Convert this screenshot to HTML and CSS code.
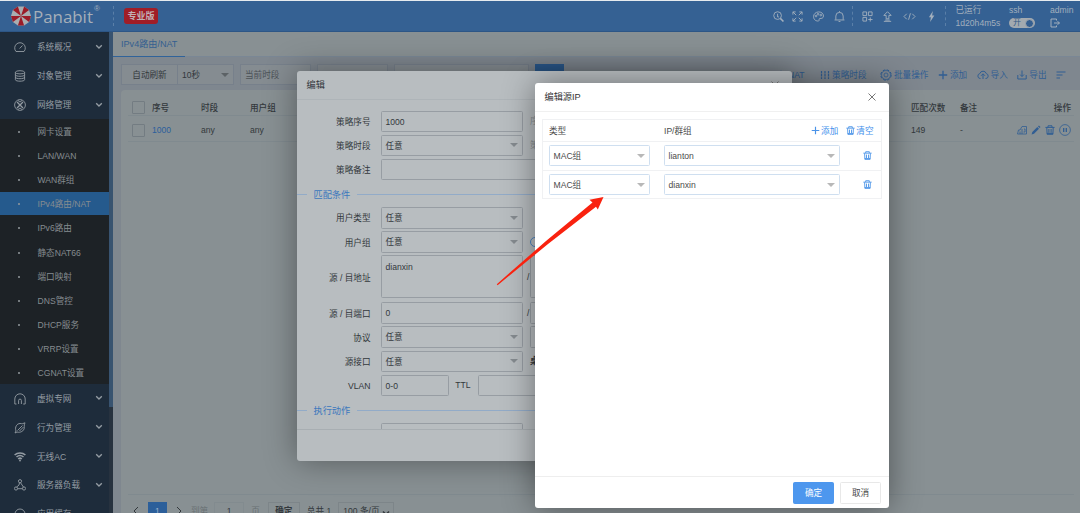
FILE: index.html
```html
<!DOCTYPE html>
<html lang="zh-CN">
<head>
<meta charset="utf-8">
<title>Panabit</title>
<link rel="stylesheet" href="styles.css">
</head>
<body>
<svg class="defs" width="0" height="0">
  <symbol id="trash" viewBox="0 0 10 10"><path d="M.4 2.400h9.200M3 2.200V.8h4v1.400M1.800 2.600l.3 6.700h5.800l.3-6.700M3.900 4v3.800M6.100 4v3.800M2 8.400h6"/></symbol>
  <symbol id="plus" viewBox="0 0 10 10"><path d="M5 .8v8.400M.8 5h8.400" stroke-width="1.300"/></symbol>
  <symbol id="down" viewBox="0 0 8 6"><path d="M1.200 1.200 4 4l2.800-2.800"/></symbol>
  <symbol id="close" viewBox="0 0 10 10"><path d="m1.500 1.500 7 7m0-7-7 7"/></symbol>
</svg>
<div class="app">
  <header class="topbar">
    <div class="brand">
      <svg class="logo" viewBox="0 0 20 20"><path fill="#a9adb0" d="M6.900.5h6.200l5 3.600L20 10l-1.900 5.900-5 3.600H6.900l-5-3.600L0 10l1.900-5.900z"/><path fill="#9b1c28" d="M10 10 13.100.5l5 3.600zM10 10h10l-1.900 5.900zM10 10l3.100 9.500H6.900zM10 10l-8.100 5.900L0 10zM10 10 1.900 4.100l5-3.600z"/></svg>
      <span class="brand-name">Panabit</span><span class="reg">®</span>
    </div>
    <div class="edition"><span>专业版</span></div>
    <div class="tools">
      <svg viewBox="0 0 12 12"><circle cx="5" cy="5" r="4.200"/><path d="m8 8 3.400 3.400" stroke-width="1.700"/><path d="M5 3v3.500h1.500"/></svg>
      <svg viewBox="0 0 12 12"><path d="M1 4V1h3M1 1l3.600 3.600M8 1h3v3M11 1 7.400 4.600M1 8v3h3M1 11l3.600-3.600M11 8v3H8M11 11 7.400 7.400"/></svg>
      <svg class="wide" viewBox="0 0 12 12"><path d="M6 11C2 11 .6 8.500 .6 6S3 1 6.200 1s5.200 2 5.200 4.500-2.300 2.800-3.800 2.600S7 11 6 11z"/><circle cx="3.300" cy="5.500" r=".9"/><circle cx="5.500" cy="3.500" r=".9"/><circle cx="8.500" cy="4.500" r=".9"/></svg>
      <svg viewBox="0 0 12 12"><path d="M.6 9.800h10.800M2 9.500V5.500a4 4 0 0 1 8 0v4M6 .2v1.300M5 11.500h2"/></svg>
    </div>
    <div class="tools second">
      <svg viewBox="0 0 12 12"><path d="M1 1h4v4H1zM7 1h4v4H7zM1 7h4v4H1zM9 7v4.500M6.800 9.300h4.700"/></svg>
      <svg viewBox="0 0 12 12"><path d="M6 .8 2 4.800h2.500v3.700h3V4.800H10zM2 11.300h8M3.500 9.900h5"/></svg>
      <svg class="wide" viewBox="0 0 14 12"><path d="M4 3 1 6l3 3M10 3l3 3-3 3M8 2.500l-2 7"/></svg>
      <svg viewBox="0 0 12 12"><path class="solid" d="M7.500 0 3.200 6.800h2.100L4.500 12l4.600-7H6.700z"/></svg>
    </div>
    <div class="uptime"><span>已运行</span><span>1d20h4m5s</span></div>
    <div class="ssh"><span>ssh</span><span class="switch">开<i></i></span></div>
    <div class="user"><span>admin</span><svg viewBox="0 0 10 10"><path d="M6.500 2.500V1H1v8h5.500V7.500M4 5h5.500M7.600 3.200 9.400 5 7.600 6.800"/></svg></div>
  </header>
  <div class="main">
    <nav class="side">
      <div class="menu">
        <a class="group"><svg viewBox="0 0 12 12"><path d="M2 10.500a5.300 5.300 0 1 1 8 0zM5.600 7.500 8.500 4.500"/></svg><span>系统概况</span><svg class="chev"><use href="#down"/></svg></a>
        <a class="group"><svg viewBox="0 0 12 12"><ellipse cx="6" cy="2.300" rx="4.600" ry="1.600"/><path d="M1.400 2.300v7.400c0 2 9.200 2 9.200 0V2.300M1.400 4.800c0 2 9.200 2 9.200 0M1.400 7.200c0 2 9.200 2 9.200 0"/></svg><span>对象管理</span><svg class="chev"><use href="#down"/></svg></a>
        <a class="group"><svg viewBox="0 0 12 12"><circle cx="6" cy="6" r="5.400"/><path d="m3 3 6 6M9 3 3 9" stroke-width="1.300"/><path d="M4 1.500 6 3l2-1.500M4 10.500 6 9l2 1.500"/></svg><span>网络管理</span><svg class="chev"><use href="#down"/></svg></a>
        <div class="sub">
          <a>网卡设置</a><a>LAN/WAN</a><a>WAN群组</a><a class="on">IPv4路由/NAT</a><a>IPv6路由</a><a>静态NAT66</a><a>端口映射</a><a>DNS管控</a><a>DHCP服务</a><a>VRRP设置</a><a>CGNAT设置</a>
        </div>
        <a class="group"><svg viewBox="0 0 12 12"><path d="M.8 11V6a5.200 5.200 0 0 1 10.400 0v5H9.200M.8 11h1.700M4.600 11V7.500a1.400 1.400 0 0 1 2.800 0V11"/></svg><span>虚拟专网</span><svg class="chev"><use href="#down"/></svg></a>
        <a class="group"><svg viewBox="0 0 12 12"><path d="M2 9c-1.500-4 1-7.500 4-7.500 1.500 0 2 .5 3 0l2-.7-.7 2c-.3 1 .2 2 0 3C10 9 6.500 11 3 10L1 11zM3.500 8.500l5-5M5.500 9l4-4"/></svg><span>行为管理</span><svg class="chev"><use href="#down"/></svg></a>
        <a class="group"><svg viewBox="0 0 12 12"><path d="M.6 4c3-2.600 7.800-2.600 10.800 0M2.500 6c2-1.700 5-1.700 7 0M4.200 8c1-.9 2.600-.9 3.600 0" stroke-width="1.600"/><circle class="solid" cx="6" cy="9.500" r=".9"/></svg><span>无线AC</span><svg class="chev"><use href="#down"/></svg></a>
        <a class="group"><svg viewBox="0 0 12 12"><circle cx="6" cy="2.200" r="1.600"/><circle cx="2" cy="9.500" r="1.600"/><circle cx="10" cy="9.500" r="1.600"/><path d="M5.500 3.700 5 6 2.600 8.100M6.500 3.700 9.500 8.100M3.500 9.700h5"/></svg><span>服务器负载</span><svg class="chev"><use href="#down"/></svg></a>
        <a class="group"><svg viewBox="0 0 12 12"><circle cx="6" cy="6" r="5"/></svg><span>应用缓存</span></a>
      </div>
      <div class="scroll"><i></i></div>
    </nav>
    <section class="content">
      <div class="tabs"><span class="tab">IPv4路由/NAT</span></div>
      <div class="filters">
        <div class="combo"><span class="auto">自动刷新</span><span class="pick">10秒<i class="caret"></i></span></div>
        <div class="box when">当前时段</div><div class="box b2"></div><div class="box b3"></div><div class="search"></div>
        <div class="actions">
          <span class="far"><svg><use href="#plus"/></svg>NAT</span>
          <span class="mid"><svg viewBox="0 0 10 10"><path d="M1.500 1v8M5 1v8M8.500 1v8" stroke-dasharray="2.500 .6" stroke-width="1.200"/></svg>策略时段</span>
          <span><svg class="gear" viewBox="0 0 12 12"><circle cx="6" cy="6" r="5.200" stroke-width="1" stroke-dasharray="2.600 1.500"/><circle cx="6" cy="6" r="4.500" stroke-width=".7"/><circle cx="6" cy="6" r="2" stroke-width=".8"/></svg>批量操作</span>
          <span><svg><use href="#plus"/></svg>添加</span>
          <span><svg class="gear" viewBox="0 0 12 12"><path d="M3.500 9.500H3A2.500 2.500 0 0 1 2.800 4.600a3.400 3.400 0 0 1 6.500 0A2.500 2.500 0 0 1 9 9.500h-.5M6 10V5M4 6.800l2-2 2 2"/></svg>导入</span>
          <span><svg viewBox="0 0 10 10"><path d="M.8 5v4h8.400V5M5 .5v5.800M3 4.500l2 2 2-2"/></svg>导出</span>
          <span><svg viewBox="0 0 10 10"><path d="M.5 2h9M.5 5h6M.5 8h3.500" stroke-width="1.200"/></svg></span>
        </div>
      </div>
      <div class="card">
        <div class="row head"><i class="check"></i><span>序号</span><span>时段</span><span>用户组</span><span class="hits">匹配次数</span><span class="note">备注</span><span class="ops">操作</span></div>
        <div class="row"><i class="check"></i><span class="link">1000</span><span>any</span><span>any</span><span class="hits">149</span><span class="note">-</span>
          <span class="ops"><svg viewBox="0 0 10 10"><path stroke-width=".8" d="M.5 9h9V1.500H5L3 5H1.500zM3 9V6.500M5 4v5M7 4h1v3H6.500"/></svg><svg viewBox="0 0 10 10"><path class="solid" d="M.6 9.400 1.300 7l5-5 1.700 1.700-5 5zM7 1.400l.9-.8L9.500 2l-.9 1z"/></svg><svg><use href="#trash"/></svg><svg class="pause" viewBox="0 0 12 12"><circle cx="6" cy="6" r="5.400" stroke-width=".8"/><path d="M4.700 4v4M7.300 4v4" stroke-width="1.300"/></svg></span></div>
        <div class="pager"><svg viewBox="0 0 8 10"><path d="M6 1 2 5l4 4"/></svg><b>1</b><svg viewBox="0 0 8 10"><path d="m2 1 4 4-4 4"/></svg><span class="faint to">到第</span><span class="num">1</span><span class="faint">页</span><span class="go">确定</span><span class="sum">总共 1</span><span class="size">100 条/页<svg viewBox="0 0 8 6"><path d="M1 1.500 4 4.500l3-3"/></svg></span></div>
      </div>
    </section>
  </div>

  <div class="dialog edit">
    <div class="title">编辑<svg class="x"><use href="#close"/></svg></div>
    <div class="form">
      <div class="line"><label>策略序号</label><span class="field">1000</span><em>序号</em></div>
      <div class="line"><label>策略时段</label><span class="field">任意<i class="caret"></i></span><em>策略</em></div>
      <div class="line"><label>策略备注</label><span class="field long"></span></div>
      <div class="legend"><span>匹配条件</span></div>
      <div class="line"><label>用户类型</label><span class="field">任意<i class="caret"></i></span></div>
      <div class="line"><label>用户组</label><span class="field">任意<i class="caret"></i></span><i class="info"></i></div>
      <div class="line tall"><label>源 / 目地址</label><span class="field">dianxin</span><u>/</u><span class="field next"></span></div>
      <div class="line"><label>源 / 目端口</label><span class="field">0</span><u>/</u><span class="field next"></span></div>
      <div class="line"><label>协议</label><span class="field">任意<i class="caret"></i></span><span class="field next gap"></span></div>
      <div class="line"><label>源接口</label><span class="field">任意<i class="caret"></i></span><em class="dark">桌面</em></div>
      <div class="line"><label>VLAN</label><span class="field short">0-0</span><span class="ttl">TTL</span><span class="field"></span></div>
      <div class="legend"><span>执行动作</span></div>
      <div class="line"><label></label><span class="field"></span></div>
    </div>
  </div>

  <div class="dialog source">
    <div class="title">编辑源IP<svg class="x"><use href="#close"/></svg></div>
    <div class="body">
      <div class="grid">
        <div class="cells top"><span>类型</span><span>IP/群组</span><span class="acts"><svg><use href="#plus"/></svg>添加<svg class="bin"><use href="#trash"/></svg>清空</span></div>
        <div class="cells"><span class="field">MAC组<i class="caret"></i></span><span class="field">lianton<i class="caret"></i></span><svg><use href="#trash"/></svg></div>
        <div class="cells"><span class="field">MAC组<i class="caret"></i></span><span class="field">dianxin<i class="caret"></i></span><svg><use href="#trash"/></svg></div>
      </div>
    </div>
    <div class="foot"><span class="btn ok">确定</span><span class="btn">取消</span></div>
  </div>
  <svg class="arrow" viewBox="0 0 110 92"><path d="M.8 89.200 50 46 96.500 7.500 93.500 4.800 107.500 2 101.800 14.500 100 11.800 52 49 1.600 90.200z"/></svg>
</div>
</body>
</html>
```

FILE: styles.css
```css
* { box-sizing: border-box; }
body { margin: 0; font: 8.6px/12px "Liberation Sans", "Noto Sans CJK SC", sans-serif; color: #33383c; }
svg { fill: none; stroke: currentColor; stroke-width: 1; display: block; flex: none; width: 10px; height: 10px; }
.solid { fill: currentColor; stroke: none; }
.defs { position: absolute; }
.app { position: relative; width: 1080px; height: 513px; overflow: hidden; background: #889093; border-top: 1.5px solid #e6ebef; display: flex; flex-direction: column; }

.topbar { height: 31px; flex: none; background: #356193; color: #a2afbd; display: flex; align-items: center; border-bottom: 1px solid #2d5686; }
.brand { width: 114px; height: 20px; padding-left: 11px; display: flex; align-items: center; border-right: 1px dashed #5a7fa8; }
.logo { width: 20px; height: 20px; stroke: none; }
.brand-name { font: 16.9px/20px "Open Sans", sans-serif; color: #a6afb9; margin: 1px 0 0 2px; }
.reg { font-size: 8px; align-self: flex-start; margin: -3px 0 0 1px; }
.edition { flex: 1; padding-left: 10px; }
.edition span { display: inline-block; width: 34px; height: 16px; border-radius: 3px; background: #a01d27; color: #c2b0b5; font-size: 9px; line-height: 16px; text-align: center; font-weight: bold; }
.tools { display: flex; align-items: center; width: 80px; height: 20px; gap: 8px; border-right: 1px dashed #5a7fa8; }
.tools svg { width: 11px; height: 11px; }
.tools svg.wide { width: 13px; margin: 0 1px; }
.tools.second { width: 93px; padding-left: 9px; gap: 9px; }
.uptime, .ssh, .user { display: flex; flex-direction: column; gap: 1px; line-height: 12px; height: 26px; padding-top: 1px; }
.uptime { width: 63px; padding-left: 9.500px; white-space: nowrap; }
.ssh { width: 41px; }
.user { width: 30px; }
.user svg { margin-top: 1px; }
.switch { width: 26px; height: 10px; margin-top: 1px; border-radius: 5px; background: #a3aab0; color: #335a86; font-size: 8px; line-height: 10px; padding-left: 4px; display: flex; justify-content: space-between; }
.switch i { width: 9px; height: 9px; border: 1px solid #a3aab0; border-radius: 50%; background: #355f90; margin: .5px 1px; }

.main { flex: 1; display: flex; min-height: 0; }
.side { width: 113px; display: flex; background: #1e2c3b; color: #949ca3; overflow: hidden; }
.menu { width: 109px; padding-top: .5px; }
.group { height: 28.85px; display: flex; align-items: center; padding: 1px 0 0 13.500px; }
.group span { margin-left: 11.500px; flex: 1; }
.group svg { width: 12px; height: 12px; stroke-width: .9; }
.group .chev { width: 8px; height: 6px; margin: 0 6px 1px 0; stroke-width: 1.3; }
.sub { background: #1d2226; height: 265px; padding-top: .5px; }
.sub a { height: 24.1px; display: flex; align-items: center; padding: 1px 0 0 18px; color: #858c90; }
.sub a::before { content: ""; width: 2px; height: 2px; background: #92999d; margin-right: 17.500px; border-radius: 1px; }
.sub .on { background: #255a8d; height: 23.100px; margin-bottom: 1px; }
.scroll { width: 4px; background: #27323f; }
.scroll i { display: block; height: 375px; background: #385370; }

.content { flex: 1; display: flex; flex-direction: column; min-width: 0; background: #7f878f; }
.tabs { height: 25px; background: #889093; border-bottom: 1px solid #7a8795; }
.tab { display: block; width: 72px; height: 25px; padding-left: 8px; color: #345f90; line-height: 24px; border-bottom: 1.500px solid #30639a; font-size: 9.1px; white-space: nowrap; }
.filters { height: 33px; padding: 2px 14px 0 8px; display: flex; align-items: center; gap: 6px; }
.combo { width: 113px; height: 21px; display: flex; border: 1px solid #77808b; background: #858c91; line-height: 20px; }
.auto { width: 56px; text-align: center; border-right: 1px solid #77808b; }
.pick { flex: 1; padding-left: 4px; position: relative; }
.caret { position: absolute; right: 4px; top: 50%; margin-top: -2px; border: 4px solid transparent; border-top-color: #6b7176; border-bottom: 0; }
.pick .caret { border-top-color: #5c6266; }
.box { height: 21px; border: 1px solid #77808b; background: #858c91; line-height: 20px; padding-left: 4px; color: #4c5257; }
.when { width: 71px; } .b2 { width: 71px; } .b3 { width: 135px; }
.search { width: 29px; height: 21px; background: #2b5a8e; }
.actions { flex: 1; display: flex; justify-content: flex-end; align-items: center; gap: 9.500px; color: #315e93; white-space: nowrap; padding-top: 1px; }
.actions span { display: flex; align-items: center; gap: 2px; }
.actions .gear { width: 12px; height: 12px; }
.actions .far { margin-right: 6px; }
.actions .mid { margin-right: 4px; }
.card { flex: 1; margin-left: 8px; background: #889093; border-radius: 4px 0 0 0; padding: 3px 6px 0 7px; display: flex; flex-direction: column; }
.row { height: 26px; display: flex; align-items: center; border-bottom: 1px solid #808a8f; padding: 3px 0 0 4px; }
.row.head { height: 23px; padding-top: 7px; font-weight: 500; }
.row.head .check { margin-top: -1px; }
.check { width: 13px; height: 13px; border: 1px solid #737c82; border-radius: 1px; margin-right: 7px; flex: none; }
.row span { width: 49px; flex: none; }
.row .link { color: #2c5f9c; }
.row .hits { margin-left: auto; }
.row .note { width: 69px; }
.row .ops { width: 45px; display: flex; justify-content: flex-end; gap: 4px; align-items: center; padding-right: 3px; color: #315e93; }
.row.head .ops { color: inherit; padding-right: 3px; }
.ops .pause { width: 12px; height: 12px; }
.pager { margin-top: auto; height: 19.500px; border-top: 1px solid #808a8f; padding: 7px 0 0 4px; display: flex; line-height: 19px; white-space: nowrap; }
.pager svg { width: 8px; height: 10px; margin-top: 4px; }
.pager b { width: 19px; height: 20px; background: #2c5f9a; color: #9bb0c8; text-align: center; margin: 0 8px; font-weight: normal; flex: none; }
.faint { color: #687074; }
.to { margin-left: 8px; }
.num { width: 30px; height: 20px; margin: 0 7px 0 6px; text-align: center; border: 1px solid #828b8f; line-height: 17px; }
.go { width: 32px; border: 1px solid #7d8589; height: 20px; text-align: center; margin: 0 7px 0 8px; font-weight: bold; line-height: 17px; }
.size { width: 56px; height: 20px; border: 1px solid #7d8589; margin-left: 7px; padding-left: 4px; display: flex; gap: 3px; line-height: 17px; }
.size svg { width: 8px; height: 6px; margin-top: 7px; stroke-width: 1.500; }

.dialog { position: absolute; border-radius: 3px; display: flex; flex-direction: column; }
.edit { left: 296.500px; top: 70px; width: 495.500px; height: 389.500px; background: #b8bdc0; box-shadow: 0 0 32px rgba(0, 0, 0, .38); }
.title { height: 28.500px; flex: none; border-bottom: 1px solid #aeb4b8; display: flex; align-items: center; justify-content: space-between; padding: 1px 12px 0 10px; font-size: 9.2px; }
.form { height: 330px; padding-top: 9.800px; overflow: hidden; border-bottom: 1px solid #a8aeb2; }
.line { height: 24.1px; display: flex; align-items: center; }
.line label { width: 74px; text-align: right; margin-right: 10.500px; padding-top: 1px; }
.field { position: relative; display: block; width: 142px; height: 21.500px; border: 1px solid #979da3; border-radius: 1.500px; padding-left: 3.500px; line-height: 20px; }
.line .caret { border-top-color: #858b90; }
.line em { font-style: normal; margin-left: 7px; color: #878d91; }
.line .dark { color: #33383c; font-weight: bold; }
.line .long { width: 300px; }
.line .short { width: 67.500px; }
.line u { text-decoration: none; width: 7px; padding-left: 4px; flex: none; }
.line .gap { margin-left: 7px; }
.tall { height: 47px; align-items: flex-start; padding-top: 1px; line-height: 44px; }
.tall .field { height: 43px; line-height: 12px; padding-top: 5px; }
.ttl { width: 29px; text-align: center; }
.info { width: 10px; height: 10px; border: 1.500px solid #4b83c0; border-radius: 50%; margin-left: 7px; }
.legend { height: 24.300px; display: flex; align-items: center; gap: 7px; color: #3b77bd; font-size: 9.2px; padding-top: 2px; }
.legend span { padding-top: 1px; }
.legend::before, .legend::after { content: ""; height: 1px; background: #92abc8; width: 10px; }
.legend::after { flex: 1; }

.source { left: 534.500px; top: 82px; width: 354px; height: 424.500px; background: #fff; box-shadow: 0 0 32px rgba(0, 0, 0, .42); color: #4b4b4b; }
.source .title { border-color: #f0f0f0; color: #333; }
.x { width: 10px; height: 10px; color: #777; }
.body { flex: 1; padding: 7px 7px 0; }
.grid { border: 1px solid #f0f1f3; height: 80px; }
.cells { height: 29px; display: flex; align-items: center; padding-left: 6.500px; border-top: 1px solid #f0f1f3; }
.cells.top { height: 21px; border: 0; padding-top: 1px; }
.cells.top span:first-child { width: 115px; }
.cells .field { width: 101px; border-color: #cfdff0; margin-right: 14px; }
.cells .field + .field { width: 176px; margin-right: 23px; }
.cells .caret { border-top-color: #b8b8b8; }
.cells svg { color: #4a93e8; width: 9px; height: 9px; }
.acts { margin-left: auto; display: flex; align-items: center; color: #3f8fec; padding-right: 7px; gap: 1px; }
.acts .bin { margin-left: 7px; }
.foot { height: 31.500px; border-top: 1px solid #eee; display: flex; justify-content: flex-end; align-items: center; padding: 1px 7.500px 0 0; gap: 6px; }
.btn { width: 41px; height: 21.500px; border: 1px solid #e8e8e8; border-radius: 1.500px; line-height: 20px; text-align: center; }
.ok { background: #4d97ee; border-color: #4d97ee; color: #fff; }
.arrow { position: absolute; left: 496px; top: 194px; width: 110px; height: 92px; fill: #f9220f; stroke: none; }
```
